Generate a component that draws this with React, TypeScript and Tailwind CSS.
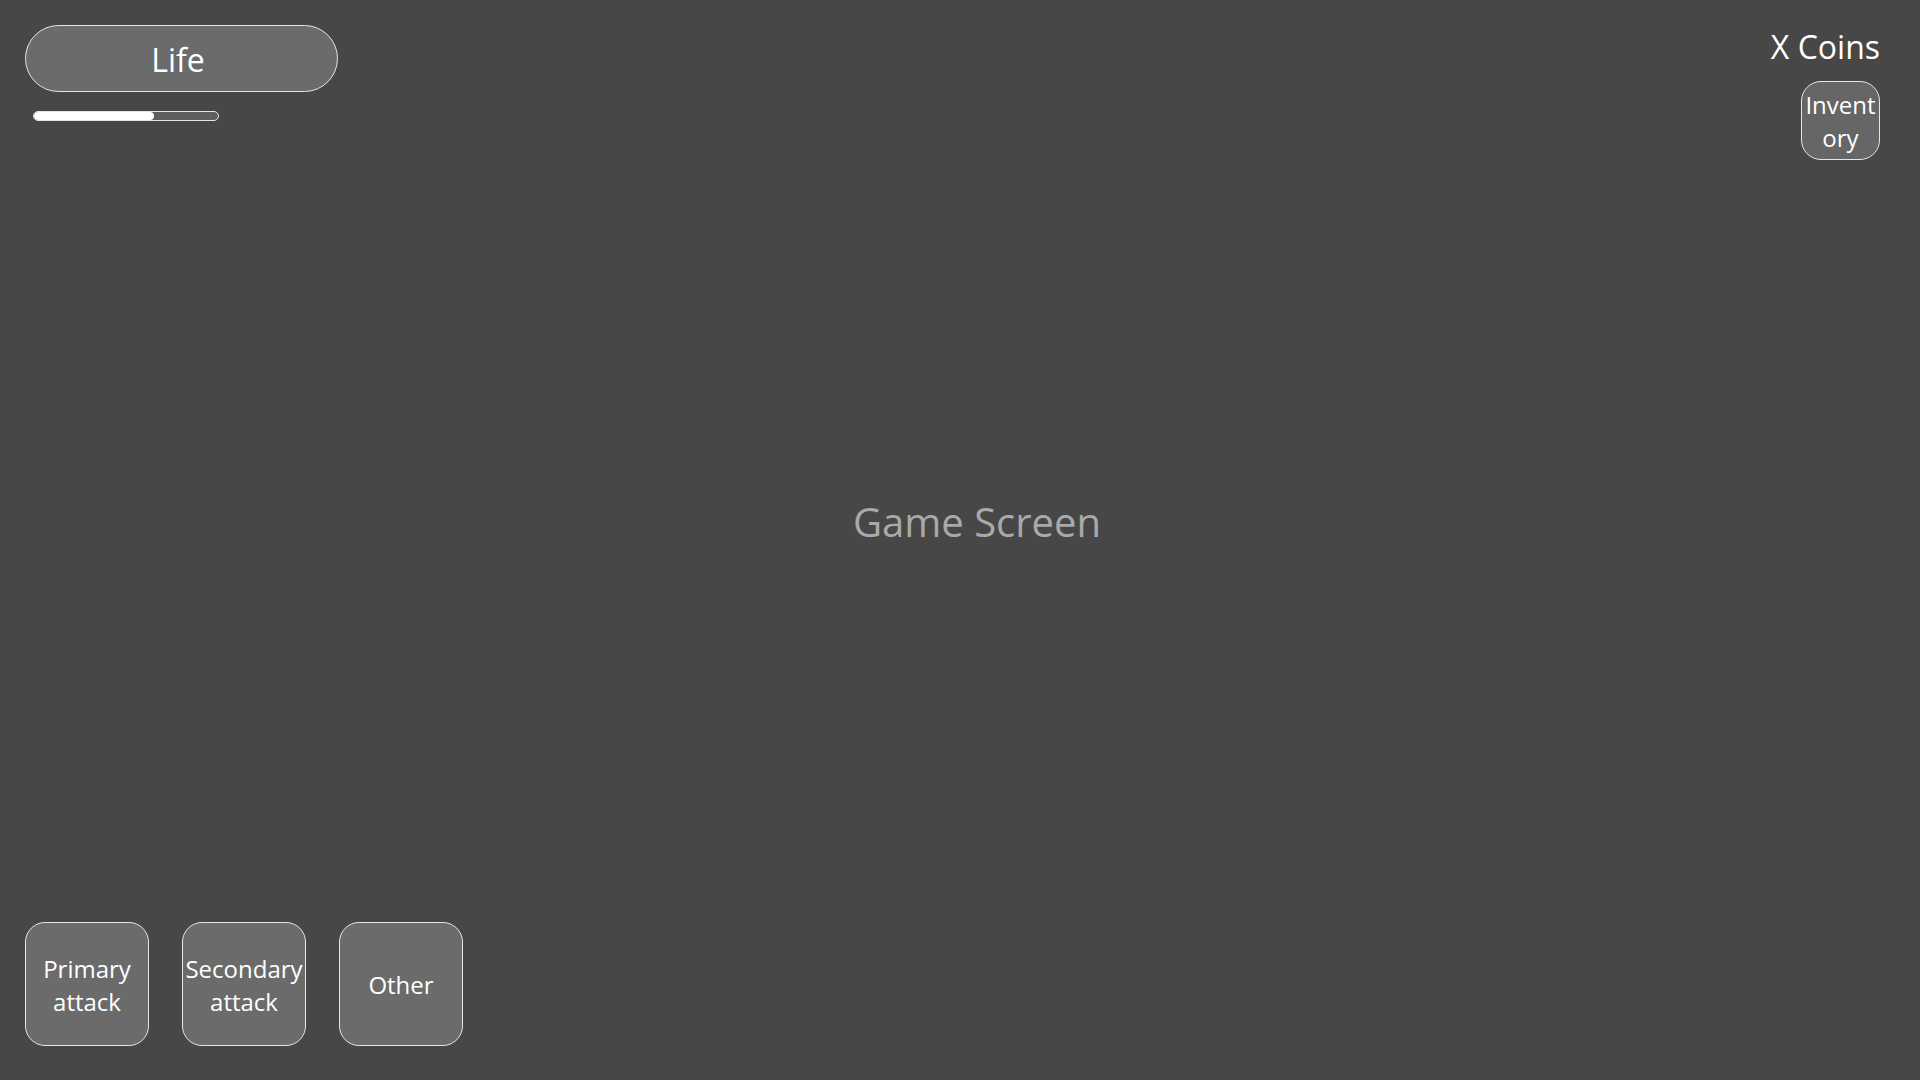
export default function App() {
  return (
    <div className="relative h-screen w-screen overflow-hidden bg-[#474747] text-white font-['Open_Sans',sans-serif]">

      {/* Game screen placeholder */}
      <div className="absolute inset-0 flex items-center justify-center pl-[34px] pb-[36px]">
        <span className="text-[40px] leading-[54px] text-[#a9a9a9]">Game Screen</span>
      </div>

      {/* HUD */}
      <div className="relative flex h-full flex-col justify-between pt-[25px] pl-[25px] pr-[40px] pb-[34px]">

        <div className="flex items-start justify-between">
          <div className="flex flex-col">
            <div className="flex h-[67px] w-[313px] items-center justify-center rounded-full border border-[#e6e6e6] bg-[#6b6b6b] pr-[7px] pt-[2px]">
              <span className="text-[32px] leading-[44px]">Life</span>
            </div>
            <div className="ml-2 mt-[19px] h-[10px] w-[186px] overflow-hidden rounded-full border border-[#e6e6e6] bg-[#5e5e5e]">
              <div className="h-full w-[65%] rounded-full bg-white"></div>
            </div>
          </div>

          <div className="flex flex-col items-end gap-3">
            <span className="text-[32px] leading-[44px]">X Coins</span>
            <button className="flex h-[79px] w-[79px] items-center justify-center rounded-[20px] border border-[#e6e6e6] bg-[#666666] px-0.5 text-center text-[24px] leading-[33px] text-white break-all">
              Inventory
            </button>
          </div>
        </div>

        <div className="flex gap-[33px]">
          {["Primary attack", "Secondary attack", "Other"].map((label) => (
            <button
              key={label}
              className="flex h-[124px] w-[124px] items-center justify-center rounded-[20px] border border-[#e6e6e6] bg-[#6b6b6b] px-0.5 pt-px text-center text-[24px] leading-[33px] text-white"
            >
              {label}
            </button>
          ))}
        </div>

      </div>
    </div>
  );
}
